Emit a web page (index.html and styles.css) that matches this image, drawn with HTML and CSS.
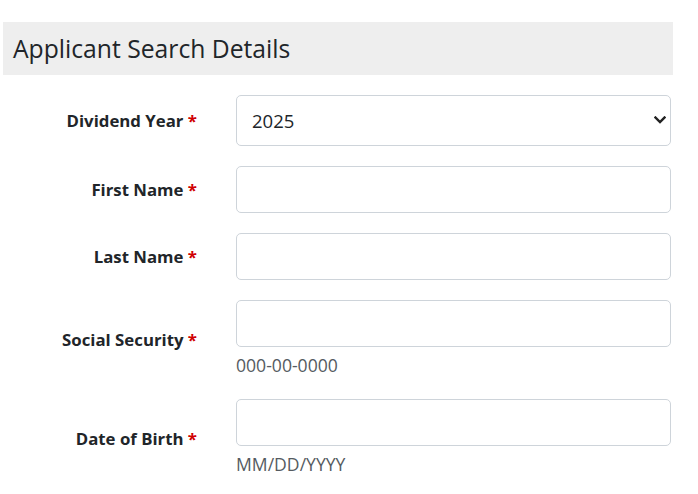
FILE: index.html
```html
<!DOCTYPE html>
<html lang="en">
<head>
<meta charset="utf-8">
<title>Applicant Search Details</title>
<link rel="stylesheet" href="styles.css">
</head>
<body>
<div class="page">
  <h2 class="section-title">Applicant Search Details</h2>
  <form class="search-form">
    <div class="form-row">
      <label class="form-label" for="year">Dividend Year <span class="req">*</span></label>
      <div class="field">
        <div class="select-wrap">
          <select id="year" class="form-select">
            <option>2025</option>
          </select>
          <svg class="chevron" width="12" height="8" viewBox="0 0 12 8" aria-hidden="true"><path d="M1.5 1.5 L6 6 L10.5 1.5" fill="none" stroke="#222" stroke-width="2.4" stroke-linecap="square"/></svg>
        </div>
      </div>
    </div>
    <div class="form-row">
      <label class="form-label" for="first">First Name <span class="req">*</span></label>
      <div class="field"><input id="first" class="form-control" type="text"></div>
    </div>
    <div class="form-row">
      <label class="form-label" for="last">Last Name <span class="req">*</span></label>
      <div class="field"><input id="last" class="form-control" type="text"></div>
    </div>
    <div class="form-row">
      <label class="form-label" for="ssn">Social Security <span class="req">*</span></label>
      <div class="field">
        <input id="ssn" class="form-control" type="text">
        <div class="form-text">000-00-0000</div>
      </div>
    </div>
    <div class="form-row">
      <label class="form-label" for="dob">Date of Birth <span class="req">*</span></label>
      <div class="field">
        <input id="dob" class="form-control" type="text">
        <div class="form-text">MM/DD/YYYY</div>
      </div>
    </div>
  </form>
</div>
</body>
</html>
```

FILE: styles.css
```css
html, body {
  margin: 0;
  padding: 0;
  background: #fff;
}
body {
  font-family: "Open Sans", "Noto Sans", "Liberation Sans", sans-serif;
  color: #212529;
}
.page {
  width: 670px;
  padding: 22px 0 0 3px;
}
.section-title {
  margin: 0;
  height: 53px;
  background: #eeeeee;
  font-weight: 400;
  font-size: 24.7px;
  line-height: 53px;
  padding-left: 10px;
  color: #212529;
}
.search-form {
  display: flex;
  flex-direction: column;
  gap: 20px;
  padding-top: 20px;
}
.form-row {
  display: flex;
  align-items: center;
}
.form-label {
  width: 194px;
  text-align: right;
  font-weight: 700;
  font-size: 16.8px;
  color: #212529;
  margin-right: 39px;
}
.req {
  color: #d00000;
}
.field {
  width: 435px;
  display: flex;
  flex-direction: column;
}
.form-control,
.form-select {
  box-sizing: border-box;
  width: 100%;
  height: 47px;
  border: 1px solid #ced4da;
  border-radius: 5px;
  background: #fff;
  font-family: inherit;
  font-size: 18.5px;
  color: #212529;
  padding: 0 15px;
  margin: 0;
  outline: none;
}
.select-wrap {
  position: relative;
}
.form-select {
  height: 51px;
  appearance: none;
  -webkit-appearance: none;
}
.chevron {
  position: absolute;
  right: 5px;
  top: 21px;
}
.form-text {
  margin-top: 5px;
  font-size: 17.6px;
  line-height: 27px;
  color: #555b61;
}
```
